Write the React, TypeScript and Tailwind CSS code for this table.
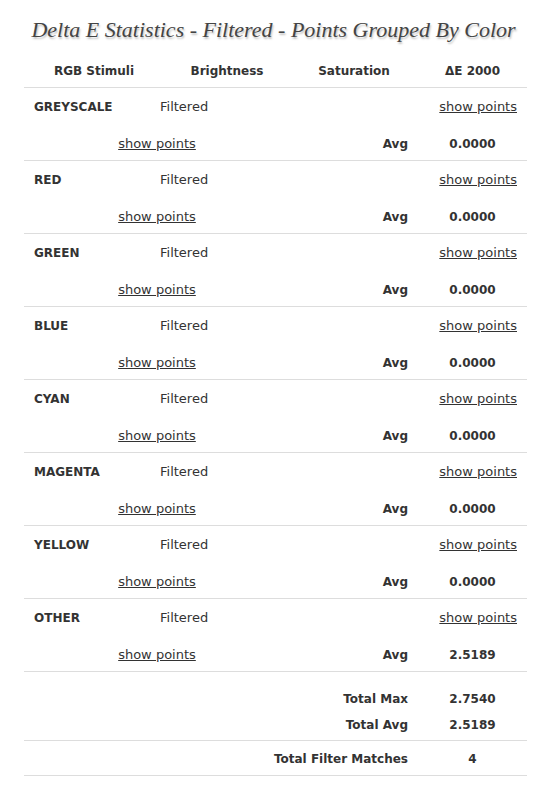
import React from "react";

const groups = [
  { name: "GREYSCALE", avg: "0.0000" },
  { name: "RED", avg: "0.0000" },
  { name: "GREEN", avg: "0.0000" },
  { name: "BLUE", avg: "0.0000" },
  { name: "CYAN", avg: "0.0000" },
  { name: "MAGENTA", avg: "0.0000" },
  { name: "YELLOW", avg: "0.0000" },
  { name: "OTHER", avg: "2.5189" },
];

export default function App() {
  return (
    <div
      className="w-[547px] h-[800px] bg-white text-[#333] text-[13px]"
      style={{ fontFamily: '"DejaVu Sans", Verdana, sans-serif' }}
    >
      <div className="pt-[16px] h-[54px] text-center">
        <h1
          className="text-[22px] italic text-[#444] leading-[28px] [text-shadow:1px_2px_2px_rgba(0,0,0,0.25)]"
          style={{ fontFamily: '"Liberation Serif", Georgia, serif' }}
        >
          Delta E Statistics - Filtered - Points Grouped By Color
        </h1>
      </div>
      <div className="mx-[24px] w-[503px]">
        <div className="grid grid-cols-[140px_126px_128px_109px] h-[34px] items-center font-bold text-[12px] text-center border-b border-[#ddd]">
          <div>RGB Stimuli</div>
          <div>Brightness</div>
          <div>Saturation</div>
          <div>ΔE 2000</div>
        </div>
        {groups.map((g) => (
          <div key={g.name} className="border-b border-[#ddd]">
            <div className="grid grid-cols-[126px_1fr_auto] h-[36px] pt-[2px] items-center">
              <div className="pl-[10px] font-bold text-[12px]">{g.name}</div>
              <div className="pl-[10px]">Filtered</div>
              <div className="pr-[10px] underline">show points</div>
            </div>
            <div className="grid grid-cols-[266px_128px_109px] h-[36px] pt-[3px] items-center">
              <div className="text-center underline">show points</div>
              <div className="pr-[10px] text-right font-bold text-[12px]">Avg</div>
              <div className="text-center font-bold text-[12px]">{g.avg}</div>
            </div>
          </div>
        ))}
        <div className="pt-[14px] pb-[2px] border-b border-[#ddd] font-bold text-[12px]">
          <div className="grid grid-cols-[394px_109px] h-[26px] items-center">
            <div className="pr-[10px] text-right">Total Max</div>
            <div className="text-center">2.7540</div>
          </div>
          <div className="grid grid-cols-[394px_109px] h-[26px] items-center">
            <div className="pr-[10px] text-right">Total Avg</div>
            <div className="text-center">2.5189</div>
          </div>
        </div>
        <div className="grid grid-cols-[394px_109px] h-[35px] pt-[2px] items-center font-bold text-[12px] border-b border-[#ddd]">
          <div className="pr-[10px] text-right">Total Filter Matches</div>
          <div className="text-center">4</div>
        </div>
      </div>
    </div>
  );
}
